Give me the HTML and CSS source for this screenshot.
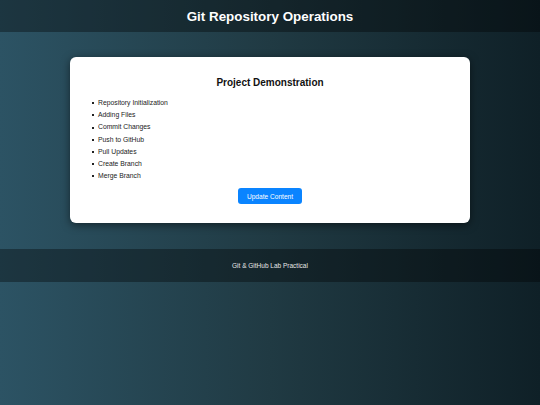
FILE: index.html
```html
<!DOCTYPE html>
<html lang="en">
<head>
<meta charset="utf-8">
<title>Git Repository Operations</title>
<link rel="stylesheet" href="styles.css">
</head>
<body>
<header class="site-header">
  <h1 class="site-title">Git Repository Operations</h1>
</header>
<main class="main">
  <section class="card">
    <h2 class="card-title">Project Demonstration</h2>
    <ul class="ops">
      <li>Repository Initialization</li>
      <li>Adding Files</li>
      <li>Commit Changes</li>
      <li>Push to GitHub</li>
      <li>Pull Updates</li>
      <li>Create Branch</li>
      <li>Merge Branch</li>
    </ul>
    <div class="actions">
      <button class="btn" type="button">Update Content</button>
    </div>
  </section>
</main>
<footer class="site-footer">
  <p class="footer-text">Git &amp; GitHub Lab Practical</p>
</footer>
</body>
</html>
```
FILE: styles.css
```css
html, body {
  margin: 0;
  padding: 0;
}
body {
  font-family: "Liberation Sans", Arial, sans-serif;
  background: linear-gradient(to right, #2c5364, #203a43, #0f2027);
  min-height: 405px;
  color: #222;
}
.site-header {
  height: 32px;
  background: rgba(0, 0, 0, 0.35);
  display: flex;
  align-items: center;
  justify-content: center;
}
.site-title {
  margin: 0;
  color: #fff;
  font-size: 13.4px;
  font-weight: bold;
}
.main {
  display: flex;
  justify-content: center;
  padding: 25px 0 26px;
}
.card {
  width: 400px;
  box-sizing: border-box;
  background: #fff;
  border-radius: 6px;
  box-shadow: 0 2px 8px rgba(0, 0, 0, 0.5);
  padding: 19px 20px 19px;
  height: 166px;
}
.card-title {
  margin: 0 0 8px;
  text-align: center;
  font-size: 10px;
  font-weight: bold;
  color: #111;
  line-height: 13px;
}
.ops {
  margin: 0;
  padding-left: 8px;
  font-size: 6.8px;
  line-height: 12.2px;
  color: #222;
  list-style: none;
}
.ops li {
  display: flex;
  align-items: center;
  gap: 4px;
}
.ops li::before {
  content: "";
  width: 2px;
  height: 2px;
  margin-left: -6px;
  background: #222;
}
.actions {
  display: flex;
  justify-content: center;
  margin-top: 6px;
}
.btn {
  width: 64px;
  height: 16px;
  padding: 0;
  border: none;
  border-radius: 3px;
  background: #0a84ff;
  color: #fff;
  font-family: "Liberation Sans", Arial, sans-serif;
  font-size: 6.6px;
}
.site-footer {
  height: 33px;
  background: rgba(0, 0, 0, 0.35);
  display: flex;
  align-items: center;
  justify-content: center;
}
.footer-text {
  margin: 0;
  color: #e6e6e6;
  font-size: 6.5px;
}
```
